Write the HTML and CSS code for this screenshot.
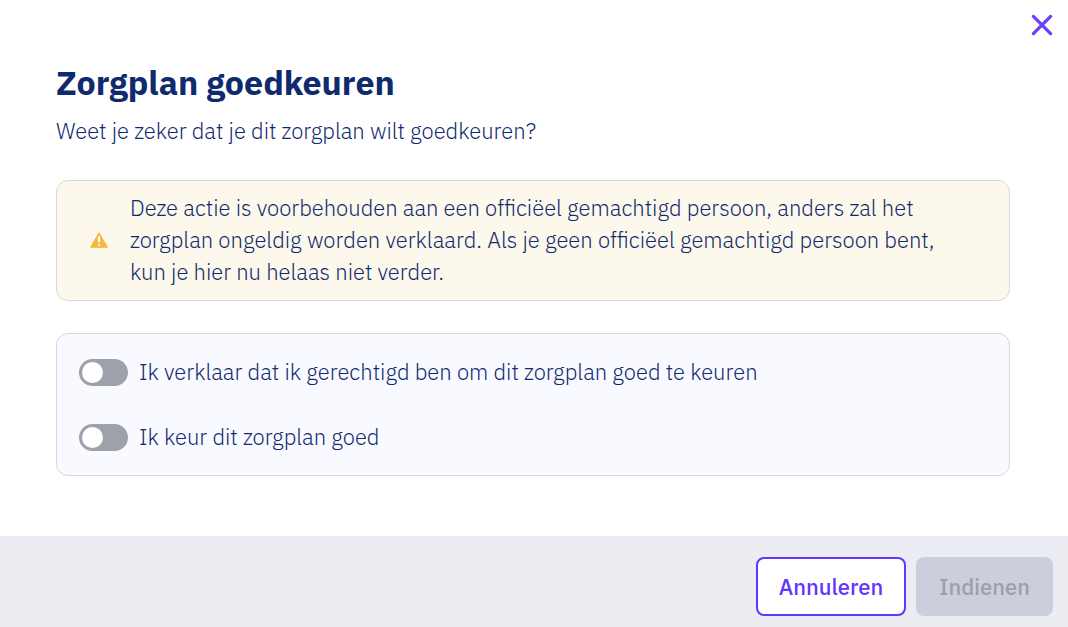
FILE: index.html
```html
<!DOCTYPE html>
<html lang="nl">
<head>
<meta charset="utf-8">
<meta name="viewport" content="width=device-width, initial-scale=1">
<title>Zorgplan goedkeuren</title>
<link rel="stylesheet" href="styles.css">
</head>
<body>
<form class="dialog" role="dialog" aria-labelledby="dialog-title">
  <header class="dialog-top">
    <button class="close" type="button" aria-label="Sluiten">
      <svg viewBox="0 0 22 22" width="22" height="22" fill="none" stroke="currentColor" stroke-width="3.3" stroke-linecap="round"><path d="M2.4 2.4 19.6 19.6M19.6 2.4 2.4 19.6"/></svg>
    </button>
  </header>
  <main class="dialog-body">
    <h1 class="title" id="dialog-title">Zorgplan goedkeuren</h1>
    <p class="intro">Weet je zeker dat je dit zorgplan wilt goedkeuren?</p>
    <div class="notice">
      <svg class="notice-icon" viewBox="0 0 18 16" width="18" height="16" aria-hidden="true">
        <path fill="#f5b840" stroke="#f5b840" stroke-width="1" stroke-linejoin="round" d="M9 .7 17.5 15.3H.5Z"/>
        <path stroke="#fff" stroke-width="2.2" stroke-linecap="round" d="M9 5.2V9.4M9 12.9V13"/>
      </svg>
      <p class="notice-text">Deze actie is voorbehouden aan een officiëel gemachtigd persoon, anders zal het zorgplan ongeldig worden verklaard. Als je geen officiëel gemachtigd persoon bent, kun je hier nu helaas niet verder.</p>
    </div>
    <div class="consents">
      <label class="consent"><input class="switch" type="checkbox" role="switch"><span>Ik verklaar dat ik gerechtigd ben om dit zorgplan goed te keuren</span></label>
      <label class="consent"><input class="switch" type="checkbox" role="switch"><span>Ik keur dit zorgplan goed</span></label>
    </div>
  </main>
  <footer class="dialog-actions">
    <button class="button button-outline" type="button">Annuleren</button>
    <button class="button button-submit" type="submit" disabled>Indienen</button>
  </footer>
</form>
</body>
</html>
```
FILE: styles.css
```css
* {
  box-sizing: border-box;
}

body {
  margin: 0;
  background: #fff;
  color: #102a6e;
  font-family: "IBM Plex Sans", "Noto Sans", sans-serif;
  font-size: 22px;
  font-weight: 350;
  line-height: 32px;
}

.dialog {
  display: flex;
  flex-direction: column;
  min-height: 100vh;
}

.dialog-top {
  display: flex;
  justify-content: flex-end;
  padding: 14px 15px 0;
}

.close {
  display: flex;
  padding: 0;
  border: 0;
  background: none;
  color: #6a40fb;
  cursor: pointer;
}

.dialog-body {
  flex: 1;
  padding: 23px 58px 60px 56px;
}

.title {
  margin: 0;
  color: #102a6e;
  font-size: 34px;
  font-weight: 700;
  line-height: 46px;
}

.intro {
  margin: 10px 0 33px;
}

.notice,
.consents {
  border: 1px solid #d5d7e0;
  border-radius: 12px;
}

.notice {
  display: flex;
  align-items: center;
  gap: 22px;
  padding: 11px 56px 12px 33px;
  background: #fdf8ec;
}

.notice-icon {
  flex: none;
}

.notice-text {
  margin: 0;
}

.consents {
  display: flex;
  flex-direction: column;
  gap: 33px;
  margin-top: 32px;
  padding: 22px;
  background: #f9faff;
}

.consent {
  display: flex;
  align-items: center;
  gap: 11px;
}

.switch {
  display: flex;
  flex: none;
  align-items: center;
  appearance: none;
  width: 49px;
  height: 27px;
  margin: 0;
  padding: 3px;
  border-radius: 14px;
  background: #9fa1aa;
}

.switch::before {
  content: "";
  width: 21px;
  height: 21px;
  border-radius: 50%;
  background: #fff;
}

.switch:checked {
  justify-content: flex-end;
  background: #6236ff;
}

.dialog-actions {
  display: flex;
  justify-content: flex-end;
  gap: 10px;
  padding: 21px 15px 11px;
  background: #ecedf3;
}

.button {
  padding: 12px 21px;
  border: 2px solid;
  border-radius: 8px;
  font: inherit;
  font-weight: 500;
  line-height: 31px;
}

.button-outline {
  border-color: #6236ff;
  background: #fff;
  color: #6236ff;
}

.button-submit {
  border-color: #cbcfdc;
  background: #cbcfdc;
  color: #9d9fa9;
}
```
